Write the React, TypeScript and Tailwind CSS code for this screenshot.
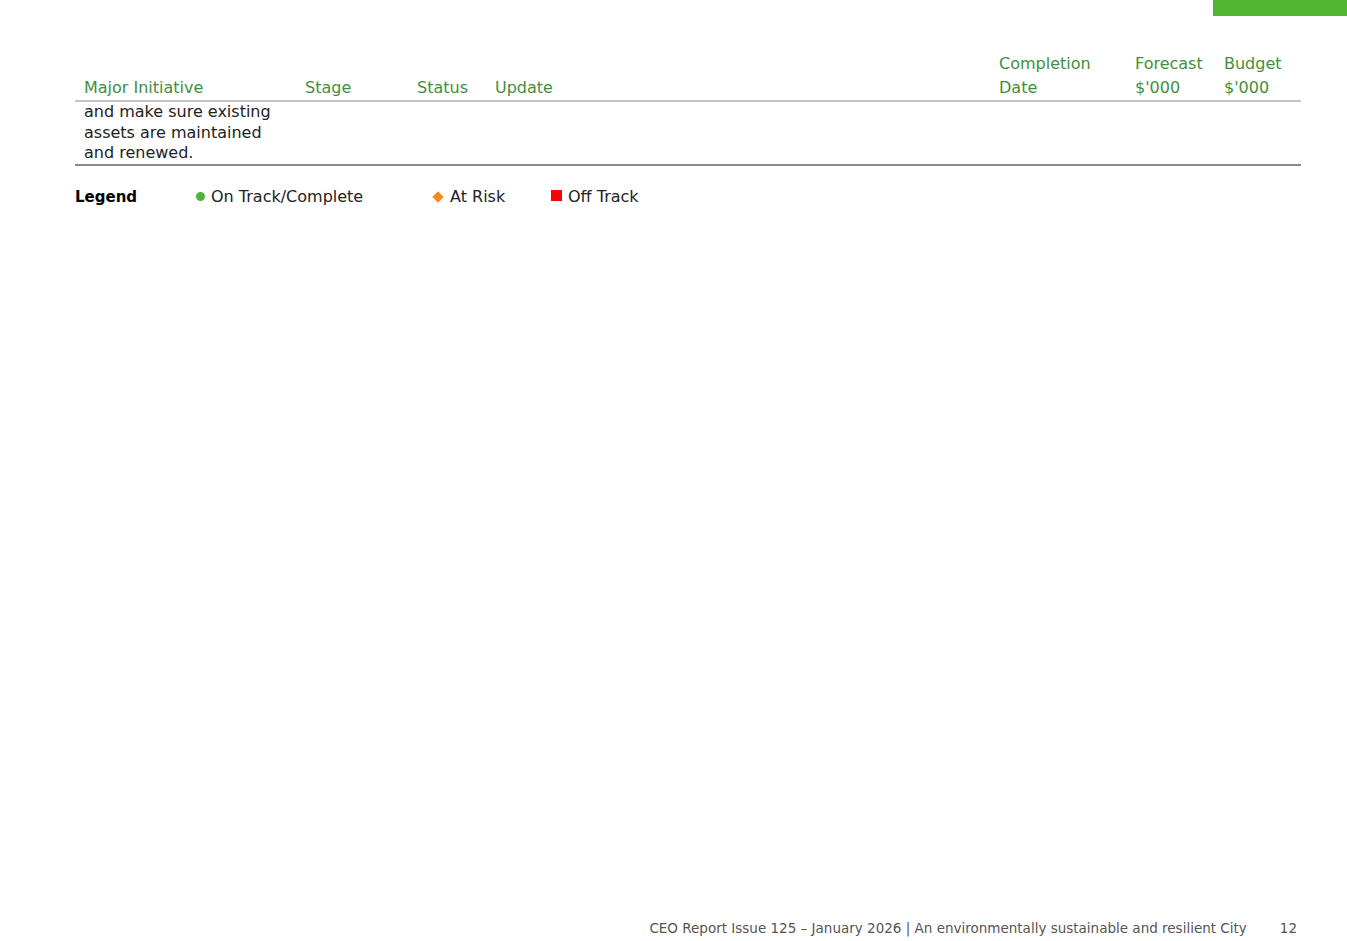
const columns = [
  { key: 'initiative', label: ['Major Initiative'], width: 'w-[221px]' },
  { key: 'stage', label: ['Stage'], width: 'w-[112px]' },
  { key: 'status', label: ['Status'], width: 'w-[78px]' },
  { key: 'update', label: ['Update'], width: 'w-[504px]' },
  { key: 'completion', label: ['Completion', 'Date'], width: 'w-[136px]' },
  { key: 'forecast', label: ['Forecast', "$'000"], width: 'w-[89px]' },
  { key: 'budget', label: ['Budget', "$'000"], width: 'w-[86px]' },
];

const rows = [
  {
    id: 1,
    initiative: 'and make sure existing assets are maintained and renewed.',
    stage: '',
    status: '',
    update: '',
    completion: '',
    forecast: '',
    budget: '',
  },
];

function LegendItem({ marker, label, width }: { marker: React.ReactNode; label: string; width: string }) {
  return (
    <div className={`flex items-center gap-[6px] ${width}`}>
      {marker}
      <span>{label}</span>
    </div>
  );
}

export default function App() {
  return (
    <div
      className="relative flex h-[941px] flex-col bg-white text-[#222222]"
      style={{ fontFamily: '"DejaVu Sans", "Noto Sans", sans-serif' }}
    >
      <div className="flex justify-end">
        <div className="h-[16px] w-[134px] bg-[#52b433]" />
      </div>

      <div className="pl-[75px] pr-[46px] pt-[36px]">
        <table className="w-full table-fixed border-collapse">
          <thead>
            <tr className="border-b-2 border-[#c4c4c4]">
              {columns.map((c) => (
                <th
                  key={c.key}
                  className={`${c.width} px-[9px] pb-0 text-left align-bottom text-[16px] font-normal leading-[24px] text-[#3f8f3c]`}
                >
                  {c.label.map((l) => (
                    <div key={l} className="whitespace-nowrap">
                      {l}
                    </div>
                  ))}
                </th>
              ))}
            </tr>
          </thead>
          <tbody>
            {rows.map((r) => (
              <tr key={r.id} className="border-b-2 border-[#8a8a8a]">
                <td className="px-[9px] align-top text-[16px] leading-[20.5px]">{r.initiative}</td>
                <td className="px-[9px] align-top">{r.stage}</td>
                <td className="px-[9px] align-top">{r.status}</td>
                <td className="px-[9px] align-top">{r.update}</td>
                <td className="px-[9px] align-top">{r.completion}</td>
                <td className="px-[9px] align-top">{r.forecast}</td>
                <td className="px-[9px] align-top">{r.budget}</td>
              </tr>
            ))}
          </tbody>
        </table>

        <div className="mt-[19px] flex items-center text-[16px] leading-[24px] text-[#222222]">
          <div className="w-[120px] text-[15px] font-bold text-black">Legend</div>
          <LegendItem
            width="w-[237px]"
            label="On Track/Complete"
            marker={<span className="ml-[1px] inline-block h-[9px] w-[9px] rounded-full bg-[#52b433]" />}
          />
          <LegendItem
            width="w-[119px]"
            label="At Risk"
            marker={<span className="ml-[2px] mr-[2px] inline-block h-[8px] w-[8px] rotate-45 bg-[#f28a1d]" />}
          />
          <LegendItem
            width="w-[200px]"
            label="Off Track"
            marker={<span className="inline-block h-[11px] w-[11px] -translate-y-[1px] bg-[#ff0000]" />}
          />
        </div>
      </div>

      <footer className="mt-auto flex justify-end gap-[33px] pb-[3px] pr-[50px] text-[13.5px] leading-[20px] text-[#555555]">
        <span>CEO Report Issue 125 – January 2026 | An environmentally sustainable and resilient City</span>
        <span>12</span>
      </footer>
    </div>
  );
}
